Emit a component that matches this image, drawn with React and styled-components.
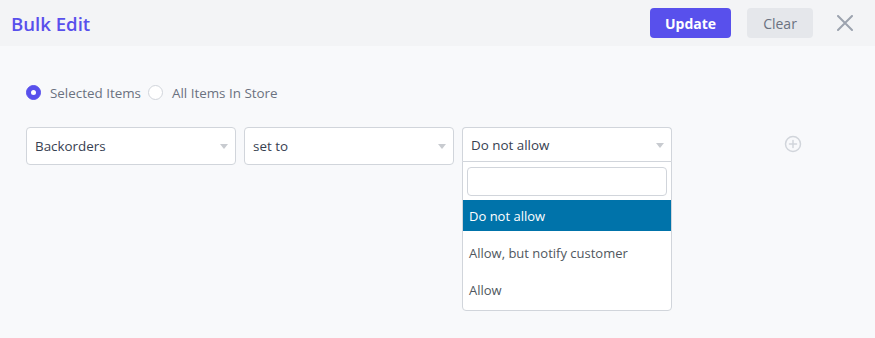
import React, { useState } from 'react';
import styled, { createGlobalStyle } from 'styled-components';

const GlobalStyle = createGlobalStyle`
  html, body {
    margin: 0;
    padding: 0;
    background: #f8f9fb;
    font-family: "Open Sans", "Noto Sans", "Liberation Sans", sans-serif;
  }
  * { box-sizing: border-box; }
`;

const Page = styled.div`
  width: 875px;
  height: 338px;
  background: #f8f9fb;
  overflow: hidden;
`;

const Header = styled.header`
  height: 46px;
  display: flex;
  align-items: center;
  padding: 0 21px 0 11px;
  background: #f3f4f6;
`;

const Title = styled.h1`
  margin: 0;
  flex: 1;
  font-size: 18.6px;
  font-weight: 600;
  color: #5850ec;
`;

const HeaderButton = styled.button`
  height: 30px;
  width: ${(p) => p.$width}px;
  border: 0;
  border-radius: 4px;
  font-family: inherit;
  font-size: 14px;
  font-weight: ${(p) => (p.$primary ? 700 : 500)};
  background: ${(p) => (p.$primary ? '#5850ec' : '#e5e7eb')};
  color: ${(p) => (p.$primary ? '#ffffff' : '#6b7280')};
  margin-right: 16px;
  cursor: pointer;
  padding: 0;
`;

const CloseButton = styled.button`
  width: 18px;
  height: 18px;
  margin-left: 7px;
  padding: 0;
  border: 0;
  background: transparent;
  display: flex;
  align-items: center;
  justify-content: center;
  cursor: pointer;
`;

const Body = styled.div`
  padding: 39px 26px 0;
`;

const RadioRow = styled.div`
  display: flex;
  align-items: center;
  height: 15px;
  gap: 7px;
`;

const RadioLabel = styled.label`
  display: flex;
  align-items: center;
  gap: 9px;
  font-size: 13.4px;
  color: #6b7280;
  cursor: pointer;
`;

const RadioDot = styled.span`
  width: 15px;
  height: 15px;
  border-radius: 50%;
  background: ${(p) => (p.$checked ? '#5850ec' : '#ffffff')};
  border: 1px solid ${(p) => (p.$checked ? '#5850ec' : '#d1d5db')};
  display: flex;
  align-items: center;
  justify-content: center;

  &::after {
    content: '';
    width: 5px;
    height: 5px;
    border-radius: 50%;
    background: #ffffff;
    display: ${(p) => (p.$checked ? 'block' : 'none')};
  }
`;

const FieldRow = styled.div`
  display: flex;
  align-items: flex-start;
  gap: 8px;
  margin-top: 27px;
`;

const SelectWrap = styled.div`
  position: relative;
  width: 210px;
`;

const SelectBox = styled.div`
  height: ${(p) => (p.$open ? 35 : 38)}px;
  display: flex;
  align-items: center;
  padding: 0 8px;
  background: #ffffff;
  border: 1px solid #d1d5db;
  border-radius: ${(p) => (p.$open ? '4px 4px 0 0' : '4px')};
  border-bottom-color: ${(p) => (p.$open ? 'transparent' : '#d1d5db')};
  font-size: 13.4px;
  color: #374151;
  position: relative;

  &::after {
    content: '';
    position: absolute;
    right: 7px;
    top: ${(p) => (p.$open ? 15 : 16)}px;
    border-left: 4px solid transparent;
    border-right: 4px solid transparent;
    border-top: 5px solid #c8cbd0;
  }
`;

const Dropdown = styled.div`
  position: absolute;
  top: 34px;
  left: 0;
  width: 210px;
  background: #ffffff;
  border: 1px solid #d1d5db;
  border-radius: 0 0 4px 4px;
  padding-bottom: 5px;
`;

const SearchBox = styled.div`
  padding: 5px 4px 4px;
`;

const SearchInput = styled.input`
  display: block;
  width: 100%;
  height: 29px;
  border: 1px solid #d1d5db;
  border-radius: 4px;
  outline: none;
  font-family: inherit;
  font-size: 13px;
`;

const OptionList = styled.ul`
  list-style: none;
  margin: 0;
  padding: 0;
  display: flex;
  flex-direction: column;
  gap: 6px;
`;

const Option = styled.li`
  height: 31px;
  display: flex;
  align-items: center;
  padding: 0 6px;
  font-size: 13px;
  background: ${(p) => (p.$active ? '#0073aa' : 'transparent')};
  color: ${(p) => (p.$active ? '#ffffff' : '#50575e')};
`;

const AddButton = styled.button`
  margin: 8px 0 0 104px;
  width: 18px;
  height: 18px;
  padding: 0;
  border: 0;
  background: transparent;
  display: flex;
  cursor: pointer;
`;

const Select = ({ value, open, children }) => (
  <SelectWrap>
    <SelectBox $open={open}>{value}</SelectBox>
    {open && children}
  </SelectWrap>
);

const options = ['Do not allow', 'Allow, but notify customer', 'Allow'];

export default function App() {
  const [scope, setScope] = useState('selected');
  return (
    <Page>
      <GlobalStyle />
      <Header>
        <Title>Bulk Edit</Title>
        <HeaderButton $primary $width={81}>Update</HeaderButton>
        <HeaderButton $width={66}>Clear</HeaderButton>
        <CloseButton aria-label="Close">
          <svg width="16" height="16" viewBox="0 0 16 16">
            <path d="M1 1 L15 15 M15 1 L1 15" stroke="#9ca3af" strokeWidth="2" strokeLinecap="round" />
          </svg>
        </CloseButton>
      </Header>
      <Body>
        <RadioRow>
          <RadioLabel onClick={() => setScope('selected')}>
            <RadioDot $checked={scope === 'selected'} />
            Selected Items
          </RadioLabel>
          <RadioLabel onClick={() => setScope('all')}>
            <RadioDot $checked={scope === 'all'} />
            All Items In Store
          </RadioLabel>
        </RadioRow>
        <FieldRow>
          <Select value="Backorders" />
          <Select value="set to" />
          <Select value="Do not allow" open>
            <Dropdown>
              <SearchBox>
                <SearchInput />
              </SearchBox>
              <OptionList>
                {options.map((o, i) => (
                  <Option key={o} $active={i === 0}>{o}</Option>
                ))}
              </OptionList>
            </Dropdown>
          </Select>
          <AddButton aria-label="Add">
            <svg width="18" height="18" viewBox="0 0 18 18" fill="none" stroke="#d1d5db" strokeWidth="1.5">
              <circle cx="9" cy="9" r="7.5" />
              <path d="M9 5.5 V12.5 M5.5 9 H12.5" strokeLinecap="round" />
            </svg>
          </AddButton>
        </FieldRow>
      </Body>
    </Page>
  );
}
